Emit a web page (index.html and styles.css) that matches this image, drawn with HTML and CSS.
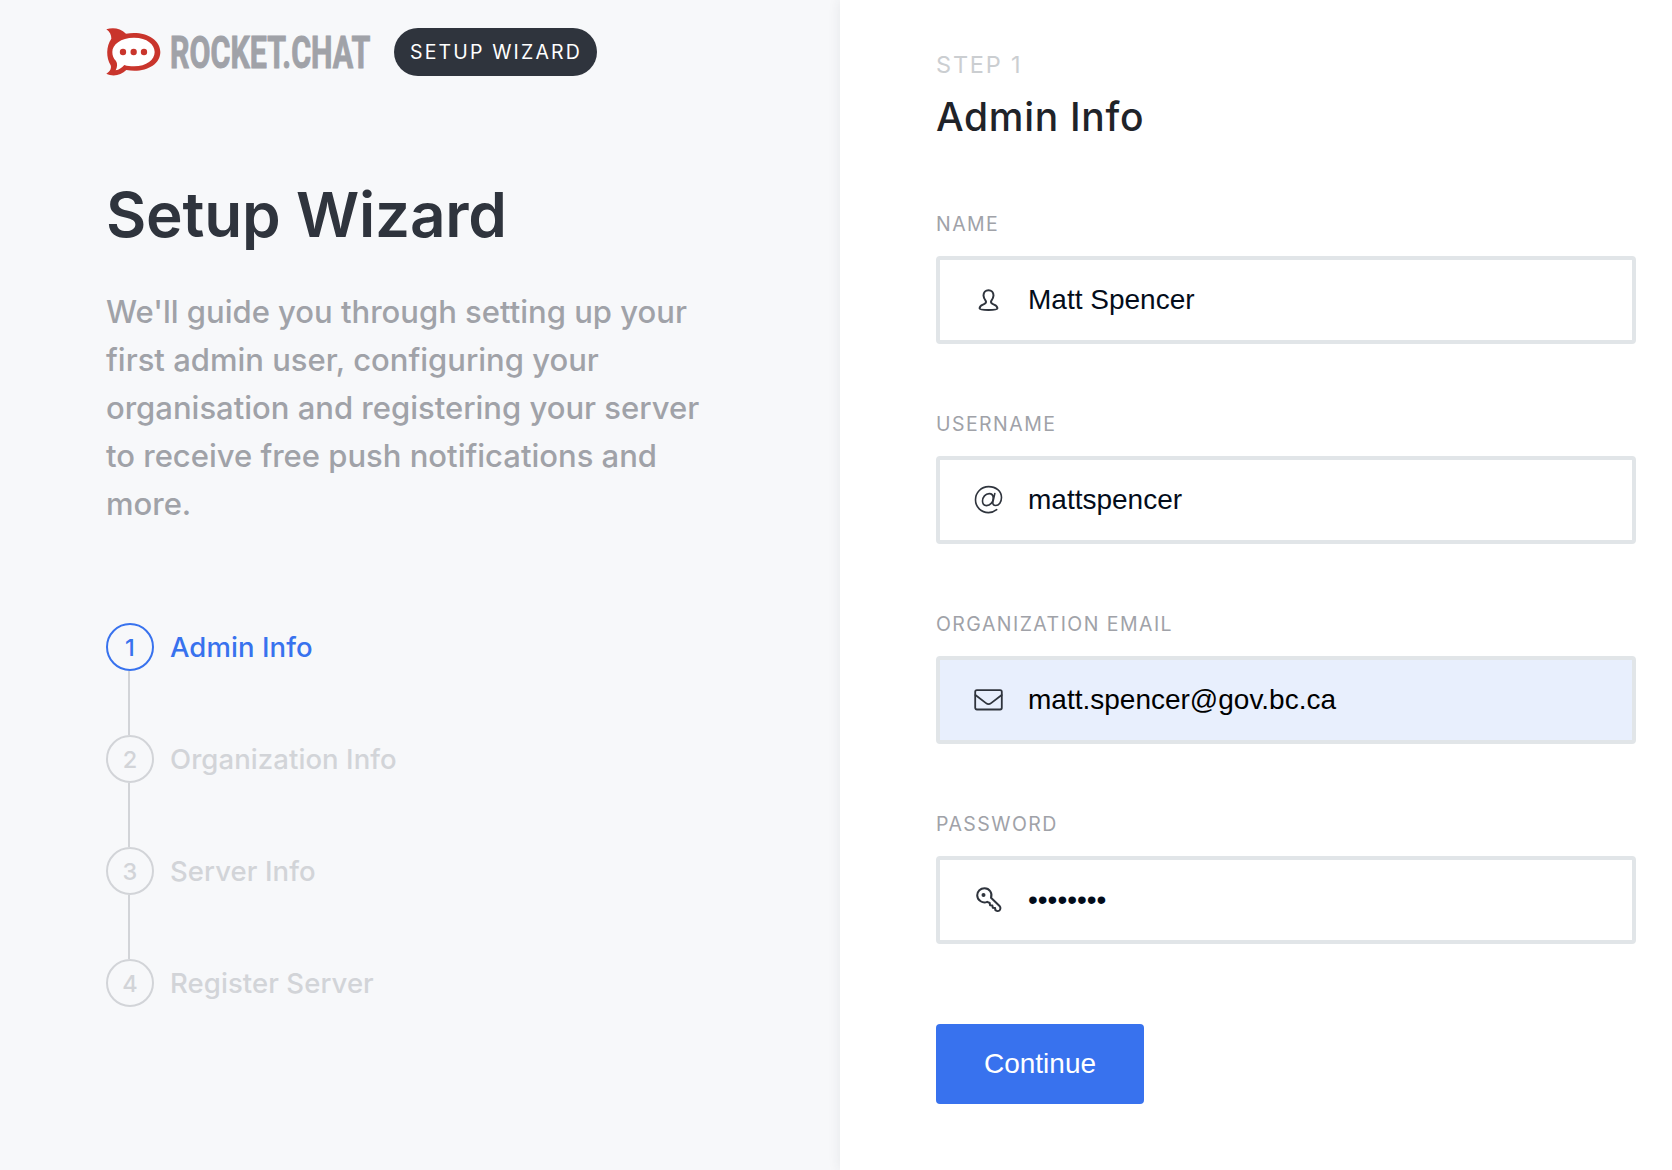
FILE: index.html
```html
<!DOCTYPE html>
<html lang="en">
<head>
<meta charset="utf-8">
<title>Setup Wizard</title>
<link rel="stylesheet" href="styles.css">
</head>
<body>
<main class="wizard">
  <aside class="intro">
    <header class="brand">
      <svg class="brand-logo" width="270" height="50" viewBox="0 0 270 50" role="img" aria-label="Rocket.Chat">
        <g transform="scale(.33333) translate(-48 -51)">
          <path fill="#c9352c" d="M49 58C68 51 91 54 108 71C160 61 211 85 211 126C211 167 161 190 109 180C93 196 69 201 49 191C61 184 65 175 62 166C48 143 48 108 64 86C64 75 60 65 49 58Z"/>
          <path fill="#fff" d="M132 83C172 83 194 104 194 126C194 149 170 169 132 169C121 169 112 168 103 165C95 174 87 179 77 181C82 172 83 160 78 153C70 145 67 136 67 126C67 104 92 83 132 83Z"/>
          <g fill="#c9352c"><circle cx="99" cy="126" r="9.5"/><circle cx="131" cy="126" r="9.5"/><circle cx="162" cy="126" r="9.5"/></g>
        </g>
        <text class="brand-name" transform="translate(64 40.500) scale(.67 1)" textLength="299" lengthAdjust="spacingAndGlyphs">ROCKET.CHAT</text>
      </svg>
      <span class="pill">Setup Wizard</span>
    </header>
    <h1 class="title">Setup Wizard</h1>
    <p class="lead">We'll guide you through setting up your first admin user, configuring your organisation and registering your server to receive free push notifications and more.</p>
    <ol class="steps">
      <li class="step step-active"><span class="step-number">1</span><span>Admin Info</span></li>
      <li class="step"><span class="step-number">2</span><span>Organization Info</span></li>
      <li class="step"><span class="step-number">3</span><span>Server Info</span></li>
      <li class="step"><span class="step-number">4</span><span>Register Server</span></li>
    </ol>
  </aside>
  <form class="panel">
    <p class="panel-step">Step 1</p>
    <h2 class="panel-title">Admin Info</h2>
    <label class="field">
      <span class="label">Name</span>
      <span class="control">
        <svg class="icon icon-bold" viewBox="0 0 32 32"><path d="M16.500 6.200C13.500 6.200 11.500 8.600 11.500 11.600C11.500 13.800 12.400 15.100 13.700 16.800C14.700 18.400 13.600 19.600 11 20.600C8.300 21.600 7.600 22.900 7.600 24.500C7.700 25.600 11.500 25.900 16.500 25.900S25.300 25.600 25.400 24.500C25.400 22.900 24.700 21.600 22 20.600C19.400 19.600 18.300 18.400 19.300 16.800C20.600 15.100 21.500 13.800 21.500 11.600C21.500 8.600 19.500 6.200 16.500 6.200Z"/></svg>
        <input class="input" type="text" value="Matt Spencer">
      </span>
    </label>
    <label class="field">
      <span class="label">Username</span>
      <span class="control">
        <svg class="icon icon-thin" viewBox="0 0 32 32"><path transform="translate(.500 -.300)" d="M24.200 26C22 27.800 19.200 28.900 16 28.900C8.600 28.900 3 23.400 3 16.100S8.700 2.900 16.100 2.900S29 7.500 29 13.900C29 18.500 26.500 21.800 23.200 21.800C20.800 21.800 20 20.300 20.500 18L22.300 9.800M20.700 14.300C20.700 11.700 19.200 9.900 16.700 9.900C12.900 9.900 10 13.500 10 17.400C10 20.200 11.500 21.900 14 21.900C17.600 21.900 20.700 18.500 20.700 14.300Z"/></svg>
        <input class="input" type="text" value="mattspencer">
      </span>
    </label>
    <label class="field">
      <span class="label">Organization Email</span>
      <span class="control control-filled">
        <svg class="icon" viewBox="0 0 32 32"><rect x="3.200" y="6.100" width="26.600" height="19.400" rx="1.700"/><path d="M3.400 11L14 19.100C15.800 20.500 17.300 20.500 19.100 19.100L29.700 11"/></svg>
        <input class="input" type="text" value="matt.spencer@gov.bc.ca">
      </span>
    </label>
    <label class="field">
      <span class="label">Password</span>
      <span class="control">
        <svg class="icon icon-bold" viewBox="0 0 32 32"><path transform="translate(.500 -.700)" d="M18.500 14.500L27.300 23C28.300 24.200 28 26.300 26.900 27.200C25.800 28 23.800 27.800 22.800 26.700L22.600 24.800L20.300 24.500L19.900 22.300L17.600 22L17.200 19.700L14.700 18.500C10.500 20.400 4.700 17.300 4.700 12C4.700 8 8 4.900 12 4.900C17 4.900 20.200 9.800 18.500 14.500Z"/><circle class="icon-dot" cx="11.500" cy="10.900" r="2"/></svg>
        <input class="input" type="password" value="password">
      </span>
    </label>
    <button class="continue" type="button">Continue</button>
  </form>
</main>
</body>
</html>
```
FILE: styles.css
```css
* { box-sizing: border-box; }
body {
  margin: 0;
  font-family: Inter, "Liberation Sans", sans-serif;
  background: #fff;
}
h1, h2, p, ol { margin: 0; padding: 0; }
.wizard { display: flex; height: 1170px; overflow: hidden; }

.intro {
  width: 840px;
  flex: none;
  padding: 27px 120px 0 106px;
  background: #f7f8fa;
}
.brand { display: flex; align-items: center; gap: 18px; height: 50px; }
.brand-logo { flex: none; }
.brand-name {
  font: 700 44px Roboto, sans-serif;
  fill: #a0a2a8;
  stroke: #a0a2a8;
  stroke-width: .8;
  vector-effect: non-scaling-stroke;
}
.pill {
  width: 203px;
  height: 48px;
  border-radius: 24px;
  background: #2f343d;
  color: #fff;
  font-size: 19.500px;
  line-height: 48px;
  letter-spacing: 2.150px;
  text-align: center;
  text-indent: 1px;
  text-transform: uppercase;
  white-space: nowrap;
}
.title {
  margin-top: 98px;
  color: #2f343d;
  font-size: 62px;
  font-weight: 600;
  line-height: 80px;
  letter-spacing: -.200px;
  white-space: nowrap;
}
.lead {
  margin-top: 33px;
  color: #a0a2a8;
  font-size: 31px;
  font-weight: 500;
  line-height: 48px;
}
.steps {
  display: flex;
  flex-direction: column;
  gap: 64px;
  margin-top: 95px;
  list-style: none;
}
.step {
  position: relative;
  display: flex;
  align-items: center;
  gap: 16px;
  height: 48px;
  color: #d2d4d8;
  font-size: 27.500px;
  font-weight: 500;
  letter-spacing: .080px;
}
.step-number {
  width: 48px;
  height: 48px;
  border: 2px solid currentColor;
  border-radius: 50%;
  font-size: 23.500px;
  line-height: 46px;
  text-align: center;
}
.step-active { color: #3872ee; }
.step:not(:last-child)::after {
  content: "";
  position: absolute;
  left: 22px;
  top: 48px;
  width: 2px;
  height: 64px;
  background: #d2d4d8;
}

.panel {
  flex: 1;
  padding: 48px 36px 0 96px;
  background: #fff;
  box-shadow: 0 0 12px rgba(47, 52, 61, .09);
}
.panel-step {
  color: #cbced1;
  font-size: 23.500px;
  line-height: 34px;
  letter-spacing: 1.800px;
  text-transform: uppercase;
}
.panel-title {
  margin: 10px 0 82px;
  color: #1f2329;
  font-size: 39px;
  font-weight: 500;
  line-height: 50px;
  letter-spacing: .700px;
}
.field { display: block; height: 200px; }
.label {
  display: block;
  height: 32px;
  color: #a0a2a8;
  font-size: 19.500px;
  line-height: 0;
  letter-spacing: 1.450px;
  text-transform: uppercase;
}
.control {
  display: flex;
  align-items: center;
  gap: 24px;
  height: 88px;
  padding: 0 32px;
  border: 4px solid #e1e5e8;
  border-radius: 4px;
}
.control-filled { background: #e8effd; }
.icon {
  flex: none;
  width: 32px;
  height: 32px;
  fill: none;
  stroke: #2f343d;
  stroke-width: 1.800;
  stroke-linejoin: round;
  stroke-linecap: round;
}
.icon-thin { stroke-width: 1.600; }
.icon-bold { stroke-width: 2; }
.icon-dot { fill: #2f343d; stroke: none; }
.input {
  flex: 1;
  min-width: 0;
  height: 40px;
  padding: 0;
  border: 0;
  outline: 0;
  background: transparent;
  color: #030c1a;
  font: 28px/40px "Liberation Sans", Arial, sans-serif;
}
.control-filled .input { color: #000; }
.continue {
  display: block;
  width: 208px;
  height: 80px;
  border: 0;
  border-radius: 4px;
  background: #3872ee;
  color: #fff;
  font: 28px "Liberation Sans", Arial, sans-serif;
}
```
